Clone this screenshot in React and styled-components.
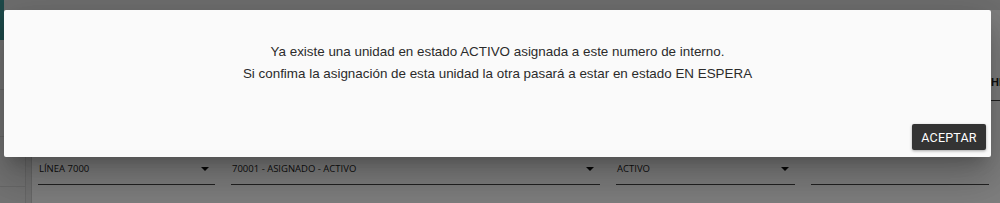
import React from "react";
import styled, { createGlobalStyle } from "styled-components";

const GlobalStyle = createGlobalStyle`
  html, body {
    margin: 0;
    padding: 0;
    width: 1000px;
    height: 203px;
    overflow: hidden;
    background: #f0f0f0;
  }
  * { box-sizing: border-box; }
`;

const Page = styled.div`
  position: relative;
  width: 1000px;
  height: 203px;
  display: flex;
  flex-direction: column;
  font-family: "Open Sans", "Liberation Sans", sans-serif;
`;

const TopBar = styled.div`
  height: 10px;
  flex-shrink: 0;
  background: #dedede;
  display: flex;
`;

const BrandBit = styled.div`
  width: 4px;
  background: #3c9494;
`;

const Body = styled.div`
  flex: 1;
  display: flex;
  min-width: 0;
`;

const Sidebar = styled.div`
  width: 25px;
  flex-shrink: 0;
  background: #e8e8e8;
  display: flex;
  flex-direction: column;
`;

const SideTeal = styled.div`
  width: 4px;
  height: 30px;
  background: #3c9494;
`;

const SideItem = styled.div`
  height: ${(p) => p.h}px;
  border-bottom: 1px solid #d2d2d2;
`;

const Gutter = styled.div`
  width: 7px;
  flex-shrink: 0;
  background: #e4e4e4;
  border-left: 1px solid #d0d0d0;
  border-right: 1px solid #d0d0d0;
`;

const Main = styled.div`
  flex: 1;
  min-width: 0;
  overflow: hidden;
  background: #ffffff;
  display: flex;
  flex-direction: column;
  padding-left: 6px;
`;

const Tabs = styled.div`
  height: 91px;
  display: flex;
  align-items: flex-end;
  padding-left: 953px;
`;

const Tab = styled.div`
  flex-shrink: 0;
  font-family: "Liberation Sans", Arial, sans-serif;
  font-size: 11px;
  font-weight: 700;
  color: #222;
  white-space: nowrap;
  padding: 0 0 12px 0;
  border-bottom: 1px solid #444;
`;

const FieldRow = styled.div`
  margin-top: 54px;
  display: flex;
  gap: 16px;
`;

const Field = styled.div`
  width: ${(p) => p.w}px;
  flex-shrink: 0;
  height: 30px;
  border-bottom: 1px solid #444;
  display: flex;
  align-items: center;
  justify-content: space-between;
  padding: 0 6px 2px 1px;
  font-size: 9.5px;
  color: #222;
`;

const Arrow = styled.span`
  width: 0;
  height: 0;
  border-left: 4px solid transparent;
  border-right: 4px solid transparent;
  border-top: 4px solid #111;
`;

const Overlay = styled.div`
  position: absolute;
  inset: 0;
  background: rgba(0, 0, 0, 0.5);
  display: flex;
  align-items: flex-start;
  padding: 10px 9px 0 4px;
`;

const Dialog = styled.div`
  width: 987px;
  height: 147px;
  background: #fafafa;
  border-radius: 2px;
  box-shadow: 0 11px 15px -7px rgba(0, 0, 0, 0.2),
    0 24px 38px 3px rgba(0, 0, 0, 0.14), 0 9px 46px 8px rgba(0, 0, 0, 0.12);
  display: flex;
  flex-direction: column;
  padding-top: 31px;
`;

const Message = styled.div`
  font-family: "Liberation Sans", Arial, sans-serif;
  font-size: 13.4px;
  line-height: 22px;
  color: #2b2b2b;
  text-align: center;
`;

const Actions = styled.div`
  margin-top: auto;
  display: flex;
  justify-content: flex-end;
  padding: 0 5px 7px 0;
`;

const Button = styled.button`
  width: 74px;
  height: 26px;
  border: none;
  border-radius: 2px;
  background: #333333;
  color: #ffffff;
  font-family: Roboto, "Liberation Sans", sans-serif;
  font-size: 12.5px;
  font-weight: 400;
  letter-spacing: 0.2px;
  box-shadow: 0 1px 3px rgba(0, 0, 0, 0.35);
  cursor: pointer;
`;

const fields = [
  { w: 177, label: "LÍNEA 7000", arrow: true },
  { w: 369, label: "70001 - ASIGNADO - ACTIVO", arrow: true },
  { w: 179, label: "ACTIVO", arrow: true },
  { w: 178, label: "", arrow: false },
];

export default function App() {
  return (
    <>
      <GlobalStyle />
      <Page>
        <TopBar>
          <BrandBit />
        </TopBar>
        <Body>
          <Sidebar>
            <SideTeal />
            <SideItem h={50} />
            <SideItem h={47} />
            <SideItem h={50} />
          </Sidebar>
          <Gutter />
          <Main>
            <Tabs>
              <Tab>HISTORIAL</Tab>
            </Tabs>
            <FieldRow>
              {fields.map((f, i) => (
                <Field key={i} w={f.w}>
                  <span>{f.label}</span>
                  {f.arrow && <Arrow />}
                </Field>
              ))}
            </FieldRow>
          </Main>
        </Body>
        <Overlay>
          <Dialog>
            <Message>
              Ya existe una unidad en estado ACTIVO asignada a este numero de interno.
              <br />
              Si confima la asignación de esta unidad la otra pasará a estar en estado EN ESPERA
            </Message>
            <Actions>
              <Button>ACEPTAR</Button>
            </Actions>
          </Dialog>
        </Overlay>
      </Page>
    </>
  );
}
